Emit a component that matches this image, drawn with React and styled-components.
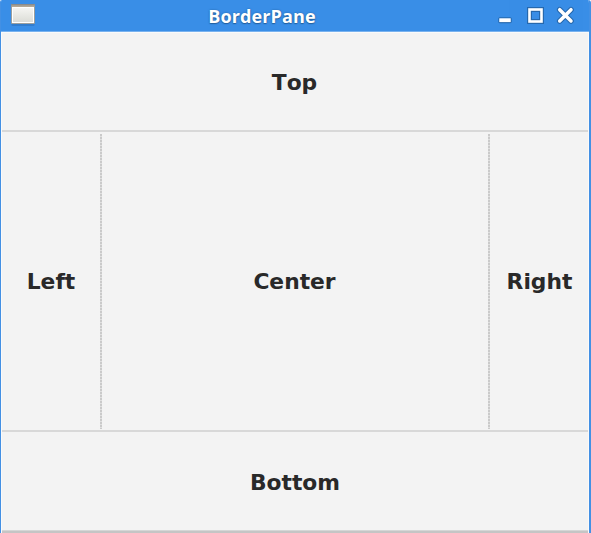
import React from "react";
import styled, { createGlobalStyle } from "styled-components";

const Global = createGlobalStyle`
  * { box-sizing: border-box; }
  body { margin: 0; overflow: hidden; background: #fff; }
`;
const Window = styled.div`
  width: 591px;
  height: 533px;
  display: flex;
  flex-direction: column;
  background: #f3f3f3;
  border: solid #4390e4;
  border-width: 0 2px 0 1px;
  border-radius: 2px 3px 0 0;
  overflow: hidden;
`;
const TitleBar = styled.header`
  height: 32px;
  flex: none;
  display: grid;
  grid-template-columns: 48px 1fr 96px;
  align-items: center;
  background: #398ee7;
  border-bottom: 1px solid #78b2ef;
`;
const AppIcon = styled.svg`
  width: 28px;
  height: 24px;
  margin: -2px 0 0 9px;
`;
const Title = styled.h1`
  margin: 1px 0 -1px -18px;
  text-align: center;
  font: 700 18px/31px "Open Sans", sans-serif;
  font-kerning: none;
  letter-spacing: 0.12px;
  color: #fff;
  text-shadow: 0 0 2px #24609f, 0 1px 1px #24609f;
`;
const Controls = styled.svg`
  width: 96px;
  height: 31px;
`;
const Pane = styled.main`
  flex: 1;
  display: grid;
  grid-template: 99px 300px 98px 3px / 1fr;
  border: solid #fafafa;
  border-width: 1px 1px 0;
`;
const Region = styled.section`
  display: flex;
  align-items: center;
  justify-content: center;
  padding-left: ${(p) => p.$indent || 0}px;
  padding-right: ${(p) => p.$inset || 0}px;
  font: bold 21.8px/26px "DejaVu Sans", sans-serif;
  font-kerning: none;
  color: #292929;
`;
const Band = styled(Region)`
  padding-top: ${(p) => p.$drop}px;
  border-bottom: ${(p) => (p.$rule ? "2px solid #d8d8d8" : "none")};
`;
const Middle = styled.div`
  display: grid;
  grid-template-columns: 99px 388px 1fr;
  padding-top: 1px;
  border-bottom: 2px solid #d8d8d8;
`;
const Column = styled(Region)`
  position: relative;
  &::after {
    content: "";
    position: absolute;
    display: ${(p) => (p.$divider ? "block" : "none")};
    right: -1px;
    top: 1px;
    bottom: 1px;
    width: 2px;
    background: repeating-linear-gradient(#cacaca 0 2px, #e0e0e0 2px 3px);
  }
`;
const BottomEdge = styled.footer`
  background: #c5c5c5;
  border-top: 1px solid #d6d6d6;
`;

export default function App() {
  return (
    <Window>
      <Global />
      <TitleBar>
        <AppIcon viewBox="0 0 28 24">
          <defs>
            <linearGradient id="sheet" x1="0" y1="0" x2="0" y2="1">
              <stop offset="0" stopColor="#f5f5f2" />
              <stop offset="1" stopColor="#dcddd7" />
            </linearGradient>
          </defs>
          <rect x="1.5" y="20" width="23" height="3" rx="1" fill="#2d70b8" opacity=".55" />
          <rect x="1" y="1" width="24" height="20" rx="1" fill="#9b9f9e" />
          <rect x="1" y="1" width="24" height="1.5" rx="1" fill="#8b8b8a" />
          <rect x="2" y="2.5" width="22" height="2" fill="#b3a794" />
          <rect x="2" y="4" width="22" height="16" fill="#fff" />
          <rect x="3" y="5" width="20" height="14" fill="url(#sheet)" />
        </AppIcon>
        <Title>BorderPane</Title>
        <Controls viewBox="0 0 96 31" fill="none">
          <g stroke="#225f9f" opacity=".8">
            <rect x="5.8" y="17.8" width="12.4" height="4.8" rx="1" strokeWidth="1.2" />
            <rect x="36.5" y="9.5" width="12" height="12" strokeWidth="5" />
            <path d="m66.7 9.7 11.3 11.3m0-11.3L66.7 21" strokeWidth="5.6" strokeLinecap="round" />
          </g>
          <rect x="6.3" y="18.3" width="11.4" height="3.8" fill="#fff" />
          <rect x="36.5" y="9.5" width="12" height="12" stroke="#fff" strokeWidth="2.6" />
          <path d="m66.7 9.7 11.3 11.3m0-11.3L66.7 21" stroke="#fff" strokeWidth="3.5" strokeLinecap="round" />
        </Controls>
      </TitleBar>
      <Pane>
        <Band $rule $drop={2} $inset={1}>Top</Band>
        <Middle>
          <Column $divider $inset={1}>Left</Column>
          <Column $divider $inset={1}>Center</Column>
          <Column $indent={2}>Right</Column>
        </Middle>
        <Band $drop={3}>Bottom</Band>
        <BottomEdge />
      </Pane>
    </Window>
  );
}
